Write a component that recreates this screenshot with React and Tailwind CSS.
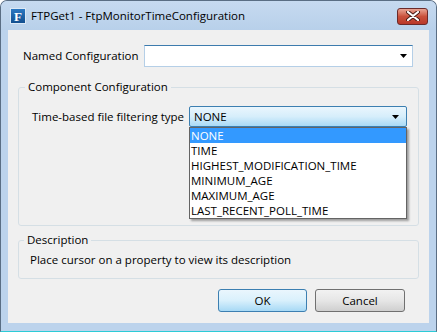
import React from "react";

const options = ["NONE", "TIME", "HIGHEST_MODIFICATION_TIME", "MINIMUM_AGE", "MAXIMUM_AGE", "LAST_RECENT_POLL_TIME"];

function Arrow() {
  return (
    <svg width="7" height="4" viewBox="0 0 7 4">
      <path d="M0 0h7L3.5 4z" fill="#000" />
    </svg>
  );
}

function GroupBox({ title, className, legendClass, children }) {
  return (
    <fieldset className={`border border-[#d5dfe5] rounded-[3px] ${className}`}>
      <legend className={`px-[3px] leading-[14px] ${legendClass}`}>{title}</legend>
      {children}
    </fieldset>
  );
}

export default function App() {
  return (
    <div
      className="w-[437px] h-[332px] flex flex-col bg-[#bcd3ec] border border-[#5a6e84] border-b-[#2ccbd6] rounded-t-[7px] text-[11.5px] text-black overflow-hidden whitespace-nowrap"
      style={{ fontFamily: '"Segoe UI", "Open Sans", sans-serif' }}
    >
      {/* Title bar */}
      <div className="h-[29px] flex items-center pl-[9px] pr-[8px] bg-gradient-to-b from-[#c6daf0] to-[#b8d0ea]">
        <div className="w-[16px] h-[16px] bg-gradient-to-b from-[#2b78c2] to-[#124f8f] border border-[#dbe8f5] flex items-center justify-center mt-[1px]">
          <span className="text-white font-bold text-[13px] leading-none" style={{ fontFamily: '"Liberation Serif", serif' }}>F</span>
        </div>
        <span className="ml-[5px] mt-[1px]">FTPGet1 - FtpMonitorTimeConfiguration</span>
        <div className="ml-auto mt-[1px] w-[31px] h-[17px] rounded-[3px] border border-[#6b2a2a] bg-gradient-to-b from-[#e8a393] via-[#c9503b] to-[#b9382a] flex items-center justify-center">
          <svg width="14" height="10" viewBox="0 0 14 10">
            <path d="M2 1l10 8M12 1L2 9" stroke="#4a1c16" strokeWidth="4" strokeLinecap="round" />
            <path d="M2 1l10 8M12 1L2 9" stroke="#fff" strokeWidth="2.2" strokeLinecap="round" />
          </svg>
        </div>
      </div>

      {/* Client area */}
      <div className="mx-[7px] h-[293px] bg-[#f0f0f0] px-[10px] pt-[15px]">
        <div className="flex items-center h-[22px]">
          <span className="ml-[5px] w-[121px]">Named Configuration</span>
          <div className="w-[269px] h-[22px] bg-white border border-[#b5cfe7] border-t-[#3d7bad] flex items-center justify-end pr-[5px]">
            <Arrow />
          </div>
        </div>

        <GroupBox title="Component Configuration" className="mt-[13px] h-[146px] pl-[13px] pt-[12px]" legendClass="ml-[-7px]">
          <div className="flex items-center h-[21px]">
            <span className="w-[157px]">Time-based file filtering type</span>
            <div className="relative">
              <div className="w-[218px] h-[21px] border border-[#3c7fb1] rounded-[2px] bg-gradient-to-b from-[#eaf6fd] via-[#d6eefb] to-[#a9daf6] flex items-center pl-[4px] pr-[7px]">
                <span>NONE</span>
                <span className="ml-auto"><Arrow /></span>
              </div>
              <ul className="absolute left-0 top-[21px] w-[218px] bg-white border border-[#646464] shadow-[2px_2px_2px_rgba(0,0,0,0.35)] z-10">
                {options.map((o, i) => (
                  <li key={o} className={`h-[15px] leading-[15px] pl-[1px] ${i === 0 ? "bg-[#3399ff] text-white" : ""}`}>
                    {o}
                  </li>
                ))}
              </ul>
            </div>
          </div>
        </GroupBox>

        <GroupBox title="Description" className="mt-[7px] h-[46px] pl-[11px]" legendClass="ml-[-6px]">
          <p className="mt-[4px]">Place cursor on a property to view its description</p>
        </GroupBox>

        <div className="flex justify-end gap-[8px] mt-[10px] pr-[14px]">
          <button className="w-[89px] h-[23px] border border-[#3c7fb1] rounded-[3px] bg-gradient-to-b from-[#eaf6fd] via-[#d9f0fc] to-[#a7d9f5]">OK</button>
          <button className="w-[90px] h-[23px] border border-[#707070] rounded-[3px] bg-gradient-to-b from-[#f2f2f2] via-[#e6e6e6] to-[#cfcfcf]">Cancel</button>
        </div>
      </div>
    </div>
  );
}
